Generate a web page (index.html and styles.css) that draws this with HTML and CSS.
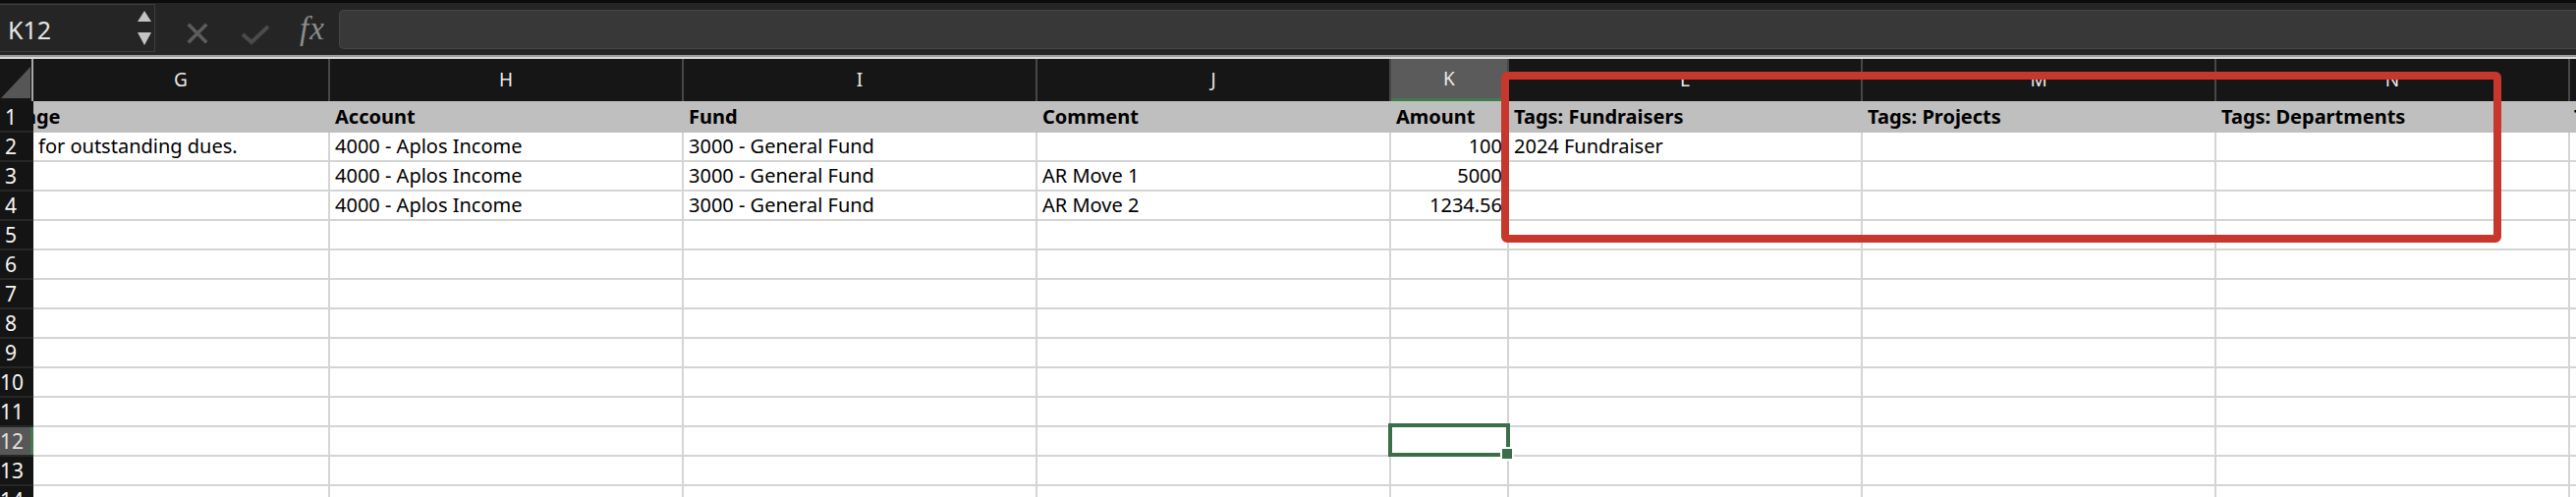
FILE: index.html
```html
<!DOCTYPE html>
<html>
	<head>
		<meta charset="utf-8">
		<title>Import sheet</title>
		<link rel="stylesheet" href="styles.css">
	</head>
	<body>
		<div class="topline"></div>
		<div class="formula-bar">
			<div class="name-box">
				<span class="ref">K12</span>
				<svg class="spin" width="16" height="38" viewBox="0 0 16 38">
					<polygon points="8,0 15,11 1,11" fill="#c4c4c4"/>
					<polygon points="1,22 15,22 8,35" fill="#c4c4c4"/>
				</svg>
			</div>
			<svg class="ico-x" width="22" height="22" viewBox="0 0 22 22">
				<path d="M3 3 L19 19 M19 3 L3 19" stroke="#5c5c5c" stroke-width="3.6" stroke-linecap="square"/>
			</svg>
			<svg class="ico-ok" width="30" height="22" viewBox="0 0 30 22">
				<path d="M2 11 L11 19 L28 3" stroke="#4b4b4b" stroke-width="4" fill="none"/>
			</svg>
			<span class="fx">fx</span>
			<div class="formula-input"></div>
		</div>
		<div class="divider"></div>

		<div class="sheet">
			<div class="row col-heads">
				<div class="corner">
					<svg width="32" height="43" viewBox="0 0 32 43"><polygon points="31,8 31,40 1,40" fill="#565656"/></svg>
				</div>
				<div class="ch">G</div>
				<div class="ch">H</div>
				<div class="ch">I</div>
				<div class="ch">J</div>
				<div class="ch sel">K</div>
				<div class="ch">L</div>
				<div class="ch">M</div>
				<div class="ch">N</div>
				<div class="ch">O</div>
			</div>

			<div class="row head-row">
				<div class="rh">1</div>
				<div class="c clip-left">age</div>
				<div class="c">Account</div>
				<div class="c">Fund</div>
				<div class="c">Comment</div>
				<div class="c">Amount</div>
				<div class="c">Tags: Fundraisers</div>
				<div class="c">Tags: Projects</div>
				<div class="c">Tags: Departments</div>
				<div class="c last">Tags: Classes</div>
			</div>

			<div class="row">
				<div class="rh">2</div>
				<div class="c">for outstanding dues.</div>
				<div class="c">4000 - Aplos Income</div>
				<div class="c">3000 - General Fund</div>
				<div class="c"></div>
				<div class="c num">100</div>
				<div class="c">2024 Fundraiser</div>
				<div class="c"></div>
				<div class="c"></div>
				<div class="c"></div>
			</div>
			<div class="row">
				<div class="rh">3</div>
				<div class="c"></div>
				<div class="c">4000 - Aplos Income</div>
				<div class="c">3000 - General Fund</div>
				<div class="c">AR Move 1</div>
				<div class="c num">5000</div>
				<div class="c"></div>
				<div class="c"></div>
				<div class="c"></div>
				<div class="c"></div>
			</div>
			<div class="row">
				<div class="rh">4</div>
				<div class="c"></div>
				<div class="c">4000 - Aplos Income</div>
				<div class="c">3000 - General Fund</div>
				<div class="c">AR Move 2</div>
				<div class="c num">1234.56</div>
				<div class="c"></div>
				<div class="c"></div>
				<div class="c"></div>
				<div class="c"></div>
			</div>
			<div class="row"><div class="rh">5</div><div class="c"></div><div class="c"></div><div class="c"></div><div class="c"></div><div class="c"></div><div class="c"></div><div class="c"></div><div class="c"></div><div class="c"></div></div>
			<div class="row"><div class="rh">6</div><div class="c"></div><div class="c"></div><div class="c"></div><div class="c"></div><div class="c"></div><div class="c"></div><div class="c"></div><div class="c"></div><div class="c"></div></div>
			<div class="row"><div class="rh">7</div><div class="c"></div><div class="c"></div><div class="c"></div><div class="c"></div><div class="c"></div><div class="c"></div><div class="c"></div><div class="c"></div><div class="c"></div></div>
			<div class="row"><div class="rh">8</div><div class="c"></div><div class="c"></div><div class="c"></div><div class="c"></div><div class="c"></div><div class="c"></div><div class="c"></div><div class="c"></div><div class="c"></div></div>
			<div class="row"><div class="rh">9</div><div class="c"></div><div class="c"></div><div class="c"></div><div class="c"></div><div class="c"></div><div class="c"></div><div class="c"></div><div class="c"></div><div class="c"></div></div>
			<div class="row"><div class="rh">10</div><div class="c"></div><div class="c"></div><div class="c"></div><div class="c"></div><div class="c"></div><div class="c"></div><div class="c"></div><div class="c"></div><div class="c"></div></div>
			<div class="row"><div class="rh">11</div><div class="c"></div><div class="c"></div><div class="c"></div><div class="c"></div><div class="c"></div><div class="c"></div><div class="c"></div><div class="c"></div><div class="c"></div></div>
			<div class="row">
				<div class="rh sel">12</div>
				<div class="c"></div>
				<div class="c"></div>
				<div class="c"></div>
				<div class="c"></div>
				<div class="c active">
					<div class="sel-box"></div>
					<div class="fill-handle"></div>
				</div>
				<div class="c"></div>
				<div class="c"></div>
				<div class="c"></div>
				<div class="c"></div>
			</div>
			<div class="row"><div class="rh">13</div><div class="c"></div><div class="c"></div><div class="c"></div><div class="c"></div><div class="c"></div><div class="c"></div><div class="c"></div><div class="c"></div><div class="c"></div></div>
			<div class="row"><div class="rh">14</div><div class="c"></div><div class="c"></div><div class="c"></div><div class="c"></div><div class="c"></div><div class="c"></div><div class="c"></div><div class="c"></div><div class="c"></div></div>
		</div>

		<!-- annotation drawn over the tag columns -->
		<div class="callout"></div>
	</body>
</html>
```

FILE: styles.css
```css
*{
	margin: 0;
	padding: 0;
	box-sizing: border-box;
}
html, body{
	width: 2622px;
	height: 506px;
	overflow: hidden;
	background: #fff;
}
body{
	position: relative;
	font-family: "Noto Sans", "Liberation Sans", sans-serif;
}

/* formula bar */
.topline{
	height: 3px;
	background: #0c0c0c;
}
.formula-bar{
	height: 52px;
	background: #252525;
	display: flex;
	align-items: flex-start;
}
.name-box{
	width: 158px;
	height: 49px;
	margin-top: 1px;
	border: 1px solid #3e3e3e;
	border-left: none;
	display: flex;
	align-items: center;
	justify-content: space-between;
	padding: 0 2px 0 8px;
}
.name-box .ref{
	color: #e6e6e6;
	font-size: 25px;
	line-height: 30px;
	margin-top: 2px;
}
.name-box .spin{
	margin-top: 2px;
}
.ico-x{
	margin: 20px 0 0 32px;
}
.ico-ok{
	margin: 21px 0 0 33px;
}
.fx{
	margin: 8px 0 0 30px;
	font-family: "Liberation Serif", "DejaVu Serif", serif;
	font-style: italic;
	font-size: 33px;
	line-height: 36px;
	color: #8c8c8c;
	letter-spacing: 1px;
}
.formula-input{
	flex: 1;
	height: 40px;
	margin: 7px 0 0 14px;
	background: #383838;
	border: 1px solid #464646;
	border-right: none;
	border-radius: 5px 0 0 5px;
}
.divider{
	height: 5px;
	background: linear-gradient(#2a2a2a 0 1px, #9d9d9d 1px 3px, #d8d8d8 3px 5px);
}

/* grid: the last column runs past the window edge */
.sheet{
	width: 2622px;
	overflow: hidden;
}
.row{
	display: grid;
	grid-template-columns: 34px 302px 360px 360px 360px 120px 360px 360px 360px 360px;
}
.col-heads{
	height: 43px;
	background: #161616;
}
.corner{
	border-right: 2px solid #a6a6a6;
	height: 43px;
}
.corner svg{
	display: block;
}
.ch{
	height: 43px;
	line-height: 43px;
	text-align: center;
	color: #e9e9e9;
	font-size: 19px;
	border-right: 2px solid #474747;
	overflow: hidden;
}
.ch.sel{
	background: #5b5b5b;
	border-bottom: 3px solid #3e7b4f;
	line-height: 40px;
}

.rh{
	height: 30px;
	background: #141414;
	color: #f4f4f4;
	font-size: 21px;
	line-height: 28px;
	text-align: center;
	padding-right: 12px;
	border-bottom: 2px solid #262626;
	white-space: nowrap;
}
.rh.sel{
	background: #575757;
	color: #e2e2e2;
	box-shadow: inset -3px 0 #3e7b4f;
}

.c{
	height: 30px;
	padding: 0 5px;
	font-size: 20px;
	line-height: 28px;
	color: #000;
	white-space: nowrap;
	overflow: hidden;
	border-right: 2px solid #d5d5d5;
	border-bottom: 2px solid #d5d5d5;
}
.c.num{
	text-align: right;
}

/* header row with the fill colour */
.head-row .rh,
.head-row .c{
	height: 32px;
	padding-top: 2px;
}
.head-row .c{
	background: #bfbfbf;
	border-color: #bfbfbf;
	font-weight: bold;
}
.head-row .c.clip-left{
	padding-left: 0;
	text-indent: -9px;
}
.head-row .c.last{
	padding-left: 4px;
}

/* active cell K12 */
.c.active{
	position: relative;
	overflow: visible;
}
.sel-box{
	position: absolute;
	left: -3px;
	right: -3px;
	top: -4px;
	bottom: -2px;
	border: 4px solid #3b6e4a;
	z-index: 2;
}
.fill-handle{
	position: absolute;
	right: -7px;
	bottom: -6px;
	width: 14px;
	height: 14px;
	background: #3b6e4a;
	border: 2px solid #fff;
	z-index: 3;
}

.callout{
	position: absolute;
	left: 1528px;
	top: 73px;
	width: 1018px;
	height: 174px;
	border: 8px solid #c8372b;
	border-radius: 6px;
	z-index: 5;
}
```
